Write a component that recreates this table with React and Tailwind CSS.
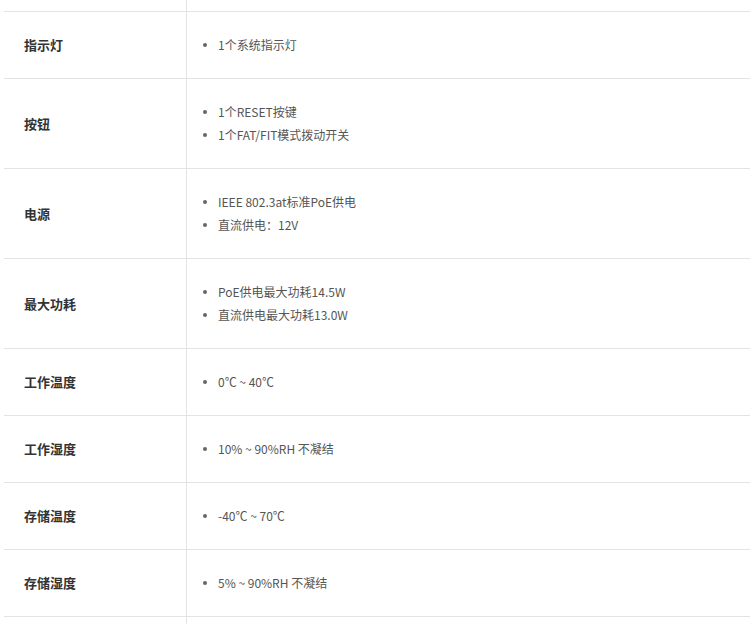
import React from "react";

const rows = [
  { label: "指示灯", items: ["1个系统指示灯"] },
  { label: "按钮", items: ["1个RESET按键", "1个FAT/FIT模式拨动开关"] },
  { label: "电源", items: ["IEEE 802.3at标准PoE供电", "直流供电：12V"] },
  { label: "最大功耗", items: ["PoE供电最大功耗14.5W", "直流供电最大功耗13.0W"] },
  { label: "工作温度", items: ["0℃ ~ 40℃"] },
  { label: "工作湿度", items: ["10% ~ 90%RH 不凝结"] },
  { label: "存储温度", items: ["-40℃ ~ 70℃"] },
  { label: "存储湿度", items: ["5% ~ 90%RH 不凝结"] },
];

const SpecRow = ({ label, items }) => (
  <div className="flex border-t border-[#e3e3e3]">
    <div className="w-[183px] shrink-0 border-r border-[#e3e3e3] pl-5 flex items-center text-[13px] font-bold text-[#333]">
      {label}
    </div>
    <ul className="flex-1 pl-4 pt-[21px] pb-[22px]">
      {items.map((item) => (
        <li key={item} className="flex items-center h-[23px] text-[12px] text-[#555]">
          <span className="w-[4px] h-[4px] rounded-full bg-[#666] mr-[11px]" />
          {item}
        </li>
      ))}
    </ul>
  </div>
);

export default function App() {
  return (
    <div
      className="w-[750px] h-[624px] overflow-hidden bg-white pl-1"
      style={{ fontFamily: '"Microsoft YaHei", "Noto Sans CJK SC", sans-serif' }}
    >
      <div className="flex h-[11px]">
        <div className="w-[183px] border-r border-[#e3e3e3]" />
      </div>
      {rows.map((r) => (
        <SpecRow key={r.label} {...r} />
      ))}
      <div className="flex h-[20px] border-t border-[#e3e3e3]">
        <div className="w-[183px] border-r border-[#e3e3e3]" />
      </div>
    </div>
  );
}
